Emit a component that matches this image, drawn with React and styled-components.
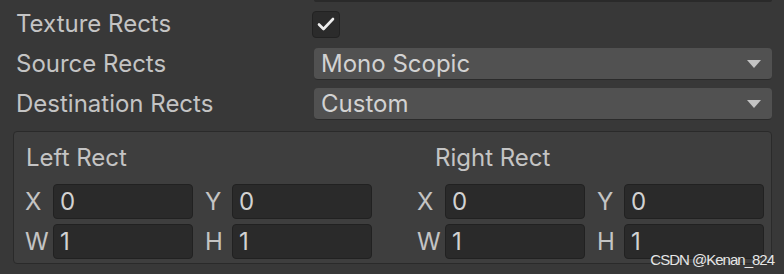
import React from "react";
import styled, { createGlobalStyle } from "styled-components";

const GlobalStyle = createGlobalStyle`
  html, body {
    margin: 0;
    padding: 0;
    background: #383838;
  }
  body {
    font-family: Inter, "Noto Sans", sans-serif;
    color: #c4c4c4;
  }
`;

const Page = styled.div`
  position: relative;
  width: 784px;
  height: 274px;
  overflow: hidden;
  display: flex;
  flex-direction: column;
`;

const TopEdge = styled.div`
  margin-left: 314px;
  width: 458px;
  height: 2px;
  background: #2a2a2a;
  border-radius: 0 0 4px 4px;
  margin-bottom: 6px;
`;

const Form = styled.div`
  display: flex;
  flex-direction: column;
  gap: 8px;
  padding: 0 12px 0 16px;
`;

const Row = styled.div`
  display: grid;
  grid-template-columns: 298px 1fr;
  align-items: center;
  height: 32px;
`;

const Label = styled.div`
  font-size: 24px;
  line-height: 32px;
  white-space: nowrap;
`;

const Checkbox = styled.div`
  margin-left: -2px;
  width: 28px;
  height: 27px;
  box-sizing: border-box;
  border-radius: 4px;
  background: #2b2b2b;
  border: 1px solid #222;
  display: flex;
  align-items: center;
  justify-content: center;
`;

const Dropdown = styled.div`
  height: 32px;
  box-sizing: border-box;
  border-radius: 4px;
  background: #515151;
  border-bottom: 1px solid #2b2b2b;
  display: flex;
  align-items: center;
  justify-content: space-between;
  padding: 0 11px 0 7px;
  font-size: 24px;
  color: #d2d2d2;
`;

const Arrow = styled.div`
  width: 0;
  height: 0;
  border-left: 7px solid transparent;
  border-right: 7px solid transparent;
  border-top: 8px solid #c4c4c4;
`;

const Group = styled.div`
  margin: 11px 12px 0 13px;
  box-sizing: border-box;
  height: 133px;
  border: 1px solid #2a2a2a;
  border-radius: 4px;
  background: #3e3e3e;
  padding: 10px 7px 4px 11px;
  display: grid;
  grid-template-columns: 347px 346px;
  column-gap: 45px;
`;

const Column = styled.div`
  display: flex;
  flex-direction: column;
`;

const Title = styled.div`
  font-size: 24px;
  line-height: 32px;
  padding-left: ${(p) => p.indent}px;
  margin-bottom: 10px;
`;

const FieldGrid = styled.div`
  display: grid;
  grid-template-columns: 28px 140px 39px 140px;
  grid-auto-rows: 35px;
  row-gap: 5px;
  align-items: center;
`;

const AxisLabel = styled.div`
  font-size: 24px;
  line-height: 35px;
  padding-left: ${(p) => (p.second ? 12 : 0)}px;
`;

const NumField = styled.div`
  height: 35px;
  box-sizing: border-box;
  border-radius: 4px;
  background: #2a2a2a;
  border: 1px solid #212121;
  padding-left: 6px;
  font-size: 24px;
  line-height: 33px;
  color: #d2d2d2;
`;

const Watermark = styled.div`
  position: absolute;
  right: 10px;
  bottom: 6px;
  font-family: "Liberation Sans", sans-serif;
  font-size: 15px;
  letter-spacing: -1px;
  color: #e6e6e6;
`;

const rects = [
  { title: "Left Rect", indent: 1, x: 0, y: 0, w: 1, h: 1 },
  { title: "Right Rect", indent: 18, x: 0, y: 0, w: 1, h: 1 },
];

const CheckIcon = () => (
  <svg width="18" height="14" viewBox="0 0 18 14">
    <polyline
      points="2,7.5 6.5,12 16,2"
      fill="none"
      stroke="#eeeeee"
      strokeWidth="2.6"
      strokeLinecap="round"
      strokeLinejoin="round"
    />
  </svg>
);

export default function App() {
  return (
    <Page>
      <GlobalStyle />
      <TopEdge />
      <Form>
        <Row>
          <Label>Texture Rects</Label>
          <Checkbox>
            <CheckIcon />
          </Checkbox>
        </Row>
        <Row>
          <Label>Source Rects</Label>
          <Dropdown>
            Mono Scopic
            <Arrow />
          </Dropdown>
        </Row>
        <Row>
          <Label>Destination Rects</Label>
          <Dropdown>
            Custom
            <Arrow />
          </Dropdown>
        </Row>
      </Form>
      <Group>
        {rects.map((r) => (
          <Column key={r.title}>
            <Title indent={r.indent}>{r.title}</Title>
            <FieldGrid>
              <AxisLabel>X</AxisLabel>
              <NumField>{r.x}</NumField>
              <AxisLabel second>Y</AxisLabel>
              <NumField>{r.y}</NumField>
              <AxisLabel>W</AxisLabel>
              <NumField>{r.w}</NumField>
              <AxisLabel second>H</AxisLabel>
              <NumField>{r.h}</NumField>
            </FieldGrid>
          </Column>
        ))}
      </Group>
      <Watermark>CSDN @Kenan_824</Watermark>
    </Page>
  );
}
